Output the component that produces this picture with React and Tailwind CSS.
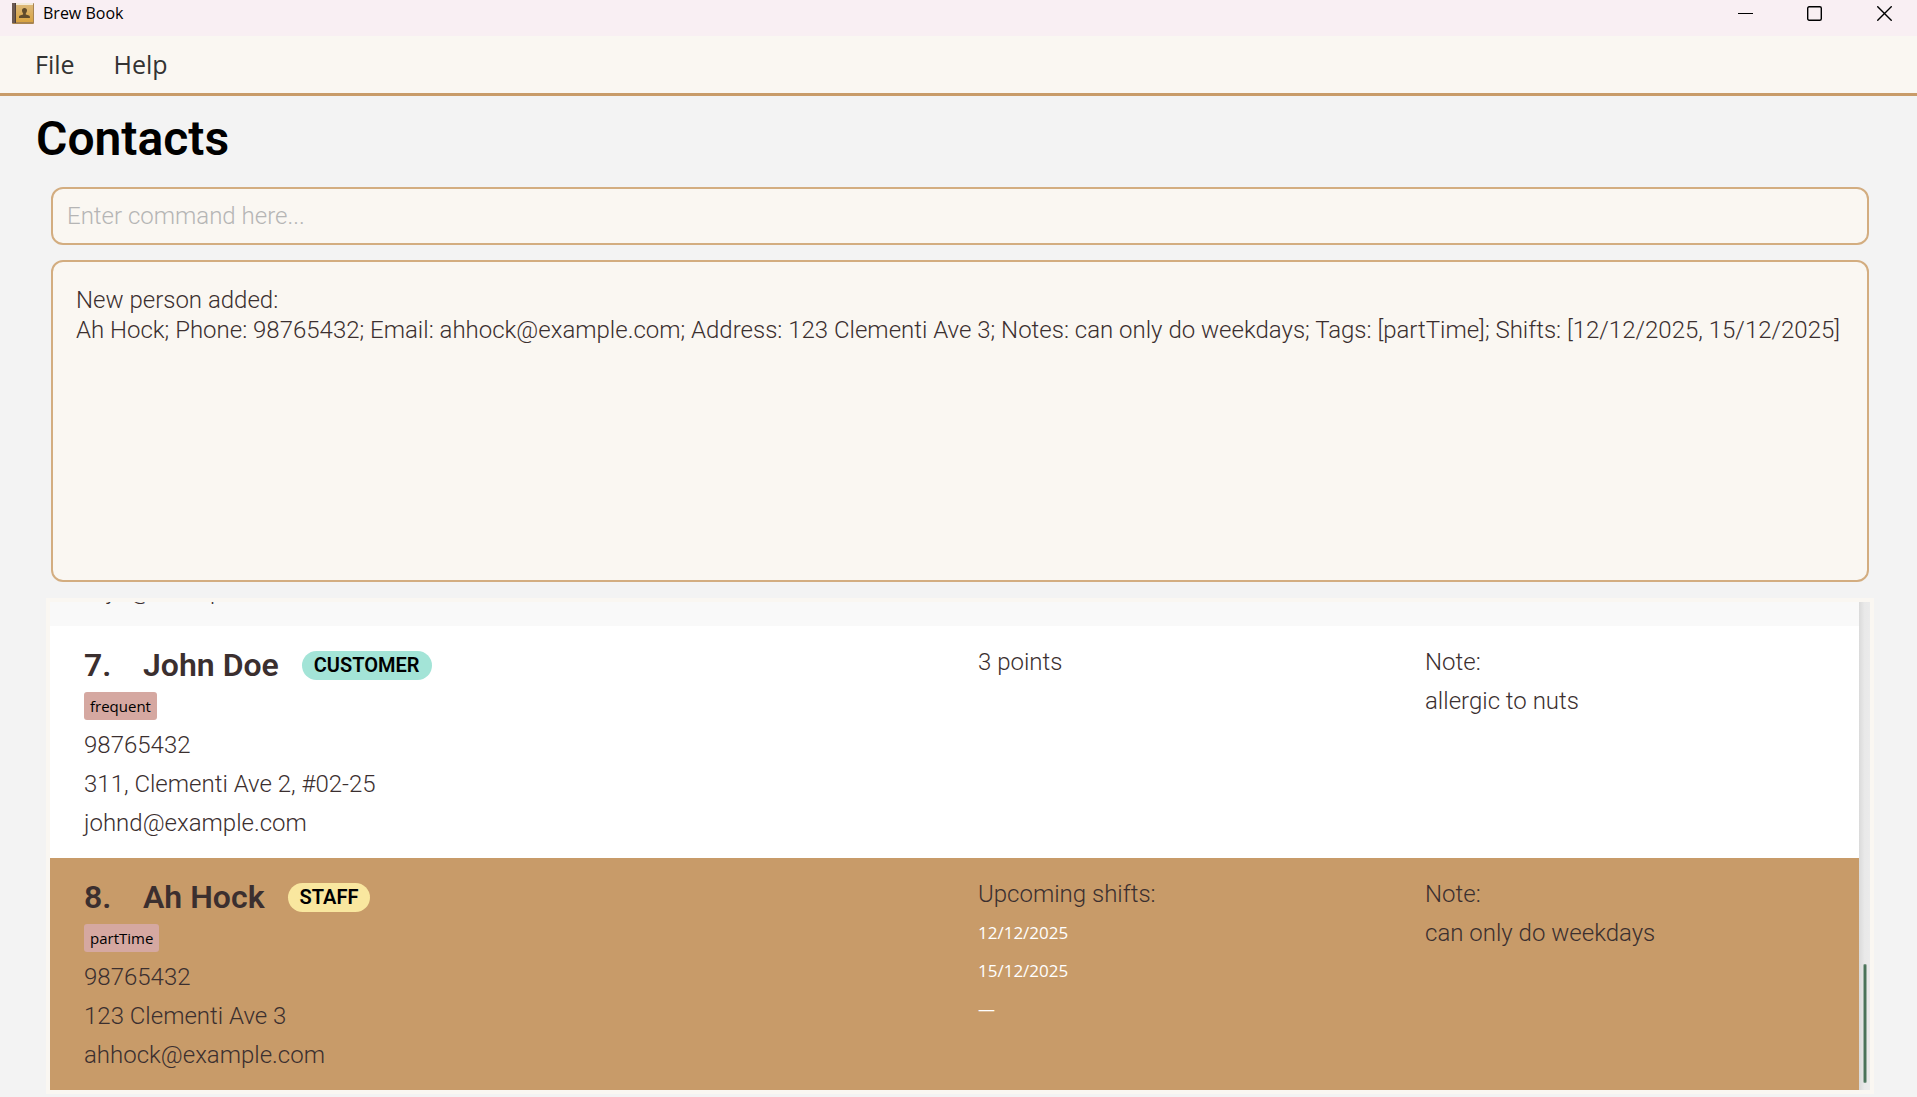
const contacts = [
  {
    id: 6,
    email: "royb@example.com",
    partial: true,
    rowClass: "bg-[#f9f9f9]",
  },
  {
    id: 7,
    name: "John Doe",
    role: "CUSTOMER",
    roleClass: "bg-[#a3e4d7]",
    tag: "frequent",
    phone: "98765432",
    address: "311, Clementi Ave 2, #02-25",
    email: "johnd@example.com",
    heading: "3 points",
    shifts: [],
    note: "allergic to nuts",
    rowClass: "bg-white",
  },
  {
    id: 8,
    name: "Ah Hock",
    role: "STAFF",
    roleClass: "bg-[#f9e79f]",
    tag: "partTime",
    phone: "98765432",
    address: "123 Clementi Ave 3",
    email: "ahhock@example.com",
    heading: "Upcoming shifts:",
    shifts: ["12/12/2025", "15/12/2025", "—"],
    note: "can only do weekdays",
    rowClass: "bg-[#c89b69]",
  },
];

function BookIcon() {
  return (
    <svg width="22" height="21" viewBox="0 0 22 21" aria-hidden="true">
      <defs>
        <linearGradient id="cover" x1="0" y1="0" x2="0" y2="1">
          <stop offset="0" stopColor="#dcb878" />
          <stop offset="1" stopColor="#d9a441" />
        </linearGradient>
      </defs>
      <rect x="0" y="0" width="22" height="21" rx="1" fill="#a98550" />
      <rect x="0" y="0" width="4" height="20" fill="#6b5a52" />
      <rect x="3" y="0" width="1" height="20" fill="#4d3f3a" />
      <rect x="4" y="0" width="17" height="2" fill="#f3ead8" />
      <rect x="4" y="2" width="17" height="17" fill="url(#cover)" />
      <path
        d="M12.500 5c1.600 0 2.500 1.100 2.500 2.600 0 1.200-.6 2.100-1.200 2.600v1.200l3.200 1.200c.6.3.9.8.9 1.400v1H7v-1c0-.6.3-1.100.9-1.400l3.200-1.200v-1.200C10.500 9.700 10 8.800 10 7.600 10 6.100 10.900 5 12.500 5z"
        fill="#5f4b2c"
      />
    </svg>
  );
}

function TitleBar() {
  return (
    <header className="flex h-9 shrink-0 items-start justify-between bg-[#f9eff3] pl-3">
      <div className="flex items-center gap-[9px] pt-[3px]">
        <BookIcon />
        <span className="font-['Open_Sans',sans-serif] text-[16px] leading-[21px] font-normal text-black">
          Brew Book
        </span>
      </div>
      <div className="flex pt-[3px]">
        <button aria-label="Minimize" className="flex h-5 w-[64px] items-center justify-center">
          <svg width="15" height="15" viewBox="0 0 15 15" stroke="#000">
            <path d="M0 7.500h15" />
          </svg>
        </button>
        <button aria-label="Maximize" className="flex h-5 w-[74px] items-center justify-center">
          <svg width="15" height="15" viewBox="0 0 15 15" fill="none" stroke="#000" strokeWidth="1.400">
            <rect x=".7" y=".7" width="13.600" height="13.600" rx="1.500" />
          </svg>
        </button>
        <button aria-label="Close" className="flex h-5 w-[66px] items-center justify-center">
          <svg width="15" height="15" viewBox="0 0 15 15" stroke="#000" strokeWidth="1.400">
            <path d="M.3.3l14.400 14.400M14.700.3L.3 14.700" />
          </svg>
        </button>
      </div>
    </header>
  );
}

function ContactRow({ contact }) {
  if (contact.partial) {
    return (
      <li className={`shrink-0 pb-[15px] pl-[34px] ${contact.rowClass}`}>
        <p className="leading-[39px]">{contact.email}</p>
      </li>
    );
  }
  return (
    <li
      className={`grid shrink-0 grid-cols-[894fr_447fr_434fr] pt-[17px] pb-[15px] pl-[34px] leading-[39px] ${contact.rowClass}`}
    >
      <div>
        <div className="flex items-center">
          <h2 className="flex text-[32px] leading-[44px] font-semibold">
            <span className="w-[59px]">{contact.id}.</span>
            {contact.name}
          </h2>
          <span
            className={`ml-[23px] rounded-full px-3 text-[20px] leading-[29px] font-semibold text-black ${contact.roleClass}`}
          >
            {contact.role}
          </span>
        </div>
        <div className="mt-[5px] mb-[6px] flex">
          <span className="rounded-[3px] bg-[#d5a8a1] px-[6px] font-['Open_Sans',sans-serif] text-[15px] leading-[28px] font-normal text-black">
            {contact.tag}
          </span>
        </div>
        <p>{contact.phone}</p>
        <p>{contact.address}</p>
        <p>{contact.email}</p>
      </div>
      <div>
        <p>{contact.heading}</p>
        {contact.shifts.map((shift) => (
          <p key={shift} className="font-['Open_Sans',sans-serif] text-[17px] leading-[38px] font-normal text-white">
            {shift}
          </p>
        ))}
      </div>
      <div>
        <p>Note:</p>
        <p>{contact.note}</p>
      </div>
    </li>
  );
}

export default function App() {
  return (
    <div className="flex h-screen flex-col bg-[#f3f3f3] font-['Roboto',sans-serif] text-[24px] font-light text-[#3b2f2f]">
      <TitleBar />
      <nav className="flex h-[60px] shrink-0 items-center gap-[39px] border-b-[3px] border-[#c89b69] bg-[#faf7f2] px-[35px] font-['Open_Sans',sans-serif] text-[25px] font-normal text-[#333]">
        <button>File</button>
        <button>Help</button>
      </nav>
      <main className="flex min-h-0 flex-1 flex-col">
        <h1 className="mt-[13px] pl-9 text-[48px] leading-[60px] font-semibold text-black">Contacts</h1>
        <input
          aria-label="Command"
          placeholder="Enter command here..."
          className="mt-[18px] mr-12 ml-[51px] h-[58px] shrink-0 rounded-[12px] border-2 border-[#d3ad80] bg-[#faf7f2] px-3.5 outline-none placeholder:text-[#b5b5b5]"
        />
        <section className="mt-[15px] mr-12 ml-[51px] h-[322px] shrink-0 rounded-[12px] border-2 border-[#d3ad80] bg-[#faf7f2] px-[23px] pt-[23px] leading-[30px]">
          <p>New person added:</p>
          <p className="whitespace-nowrap">
            Ah Hock; Phone: 98765432; Email: ahhock@example.com; Address: 123 Clementi Ave 3; Notes: can only do
            weekdays; Tags: [partTime]; Shifts: [12/12/2025, 15/12/2025]
          </p>
        </section>
        <section className="mt-4 mr-[43px] mb-[3px] ml-[46px] flex min-h-0 flex-1 border-4 border-[#faf7f2]">
          <ul className="flex min-w-0 grow flex-col justify-end overflow-hidden">
            {contacts.map((contact) => (
              <ContactRow key={contact.id} contact={contact} />
            ))}
          </ul>
          <div className="flex w-[11px] shrink-0 flex-col items-center justify-end bg-linear-to-r from-[#dadada] via-[#e9e9e9] to-[#ebebeb] pb-[7px]">
            <div className="h-[119px] w-1 rounded-full border-x border-[#9bb0a3] bg-[#4a7359]" />
          </div>
        </section>
      </main>
    </div>
  );
}
